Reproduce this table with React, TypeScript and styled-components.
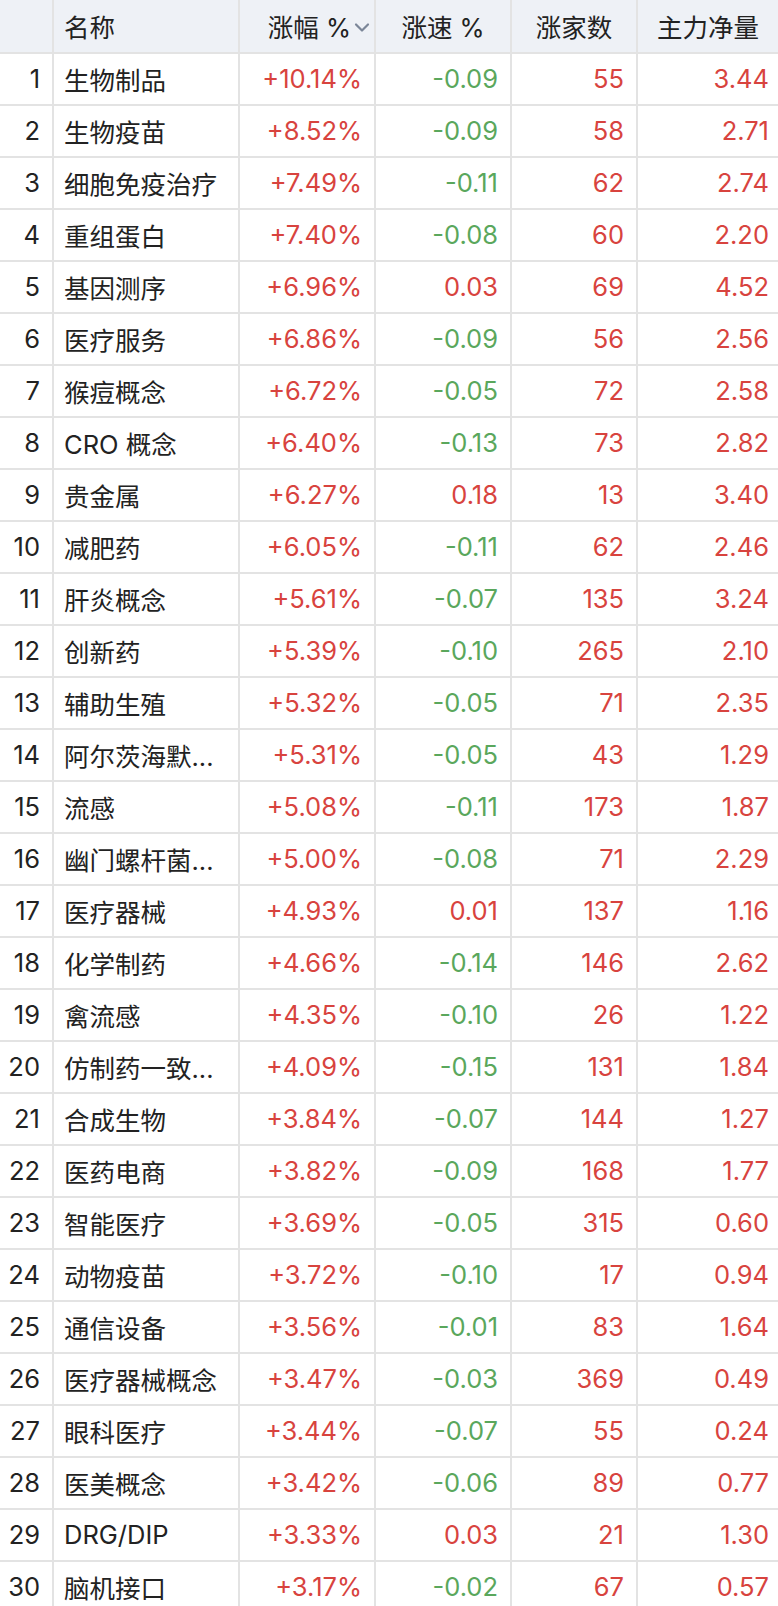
import React from "react";
import styled, { createGlobalStyle } from "styled-components";

const Global = createGlobalStyle`
  html, body { margin: 0; padding: 0; background: #fff; }
  body { font-family: "Inter", "Noto Sans CJK SC", sans-serif; }
`;

const RED = "#d8433e";
const GREEN = "#5aa75c";
const LINE = "#e3e3e3";

const Table = styled.div`
  width: 778px;
  display: grid;
  grid-template-columns: 54px 186px 136px 136px 126px 140px;
  font-size: 25.5px;
  color: #222;
`;

const HeadCell = styled.div<{ $align?: "left" | "center" | "right" }>`
  height: 54px;
  box-sizing: border-box;
  padding: 0 10px 2px;
  background: #eef1f6;
  border-bottom: 2px solid ${LINE};
  border-right: 2px solid ${LINE};
  display: flex;
  align-items: center;
  justify-content: ${(p) =>
    p.$align === "left" ? "flex-start" : p.$align === "right" ? "flex-end" : "center"};
  white-space: nowrap;
  &:nth-child(6n) { border-right: none; }
`;

const Cell = styled.div<{ $align?: "left" | "right"; $color?: string }>`
  height: 52px;
  box-sizing: border-box;
  border-bottom: 2px solid ${LINE};
  border-right: 2px solid ${LINE};
  display: flex;
  align-items: center;
  justify-content: ${(p) => (p.$align === "left" ? "flex-start" : "flex-end")};
  padding: ${(p) => (p.$align === "left" ? "0 6px 2px 10px" : "0 12px 2px 2px")};
  color: ${(p) => p.$color || "#222"};
  white-space: nowrap;
  overflow: hidden;
  &:nth-child(6n) { border-right: none; padding-right: 9px; }
`;

const Chevron = styled.svg`
  width: 18px;
  height: 11px;
  margin-left: 2px;
  margin-top: 5px;
  flex: none;
`;

type Row = [string, string, string, string, string];

const rows: Row[] = [
  ["生物制品", "+10.14%", "-0.09", "55", "3.44"],
  ["生物疫苗", "+8.52%", "-0.09", "58", "2.71"],
  ["细胞免疫治疗", "+7.49%", "-0.11", "62", "2.74"],
  ["重组蛋白", "+7.40%", "-0.08", "60", "2.20"],
  ["基因测序", "+6.96%", "0.03", "69", "4.52"],
  ["医疗服务", "+6.86%", "-0.09", "56", "2.56"],
  ["猴痘概念", "+6.72%", "-0.05", "72", "2.58"],
  ["CRO 概念", "+6.40%", "-0.13", "73", "2.82"],
  ["贵金属", "+6.27%", "0.18", "13", "3.40"],
  ["减肥药", "+6.05%", "-0.11", "62", "2.46"],
  ["肝炎概念", "+5.61%", "-0.07", "135", "3.24"],
  ["创新药", "+5.39%", "-0.10", "265", "2.10"],
  ["辅助生殖", "+5.32%", "-0.05", "71", "2.35"],
  ["阿尔茨海默...", "+5.31%", "-0.05", "43", "1.29"],
  ["流感", "+5.08%", "-0.11", "173", "1.87"],
  ["幽门螺杆菌...", "+5.00%", "-0.08", "71", "2.29"],
  ["医疗器械", "+4.93%", "0.01", "137", "1.16"],
  ["化学制药", "+4.66%", "-0.14", "146", "2.62"],
  ["禽流感", "+4.35%", "-0.10", "26", "1.22"],
  ["仿制药一致...", "+4.09%", "-0.15", "131", "1.84"],
  ["合成生物", "+3.84%", "-0.07", "144", "1.27"],
  ["医药电商", "+3.82%", "-0.09", "168", "1.77"],
  ["智能医疗", "+3.69%", "-0.05", "315", "0.60"],
  ["动物疫苗", "+3.72%", "-0.10", "17", "0.94"],
  ["通信设备", "+3.56%", "-0.01", "83", "1.64"],
  ["医疗器械概念", "+3.47%", "-0.03", "369", "0.49"],
  ["眼科医疗", "+3.44%", "-0.07", "55", "0.24"],
  ["医美概念", "+3.42%", "-0.06", "89", "0.77"],
  ["DRG/DIP", "+3.33%", "0.03", "21", "1.30"],
  ["脑机接口", "+3.17%", "-0.02", "67", "0.57"],
];

const numColor = (v: string) => (v.startsWith("-") ? GREEN : RED);

export default function App() {
  return (
    <>
      <Global />
      <Table>
        <HeadCell />
        <HeadCell $align="left">名称</HeadCell>
        <HeadCell $align="right" style={{ paddingRight: 3 }}>
          涨幅 %
          <Chevron viewBox="0 0 18 11">
            <path d="M3 2.5 L9 8.5 L15 2.5" fill="none" stroke="#7b8698" strokeWidth="2.2" strokeLinecap="round" strokeLinejoin="round" />
          </Chevron>
        </HeadCell>
        <HeadCell>涨速 %</HeadCell>
        <HeadCell>涨家数</HeadCell>
        <HeadCell>主力净量</HeadCell>
        {rows.map((r, i) => (
          <React.Fragment key={i}>
            <Cell>{i + 1}</Cell>
            <Cell $align="left">{r[0]}</Cell>
            <Cell $color={RED}>{r[1]}</Cell>
            <Cell $color={numColor(r[2])}>{r[2]}</Cell>
            <Cell $color={RED}>{r[3]}</Cell>
            <Cell $color={RED}>{r[4]}</Cell>
          </React.Fragment>
        ))}
      </Table>
    </>
  );
}
